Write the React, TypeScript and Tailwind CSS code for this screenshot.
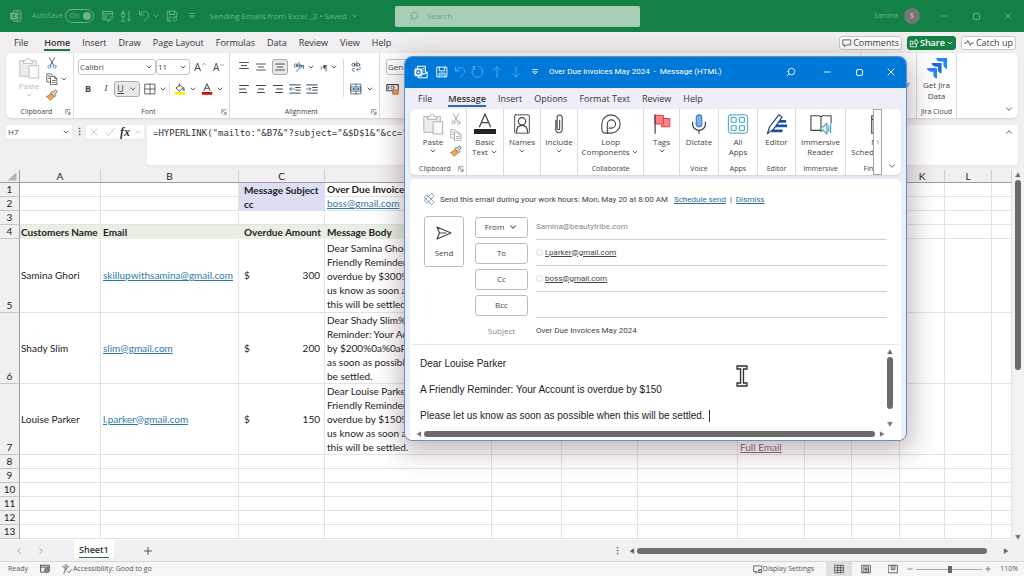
import type { ReactNode } from 'react'
import {
  AlignCenter, AlignLeft, AlignRight, ChevronDown, ChevronLeft, ChevronRight, ChevronUp,
  Mic, Minus, Plus, Search, X,
} from 'lucide-react'

const UI = 'font-["Open_Sans",sans-serif]'
const NARROW = 'font-["Roboto",sans-serif]'
const CELL = 'border-r border-b border-[#e3e3e3] overflow-hidden'

const columns = ['A', 'B', 'C', 'D', 'E', 'F', 'G', 'H', 'I', 'J', 'K', 'L', '']

const customers = [
  {
    row: 5,
    height: 'h-[74px]',
    name: 'Samina Ghori',
    email: 'skillupwithsamina@gmail.com',
    amount: 300,
    body: 'Dear Samina Ghori%0a%0aA\nFriendly Reminder: Your Account is\noverdue by $300%0a%0aPlease let\nus know as soon as possible when\nthis will be settled.',
  },
  {
    row: 6,
    height: 'h-[71px]',
    name: 'Shady Slim',
    email: 'slim@gmail.com',
    amount: 200,
    body: 'Dear Shady Slim%0a%0aA Friendly\nReminder: Your Account is overdue\nby $200%0a%0aPlease let us know\nas soon as possible when this will\nbe settled.',
  },
  {
    row: 7,
    height: 'h-[71px]',
    name: 'Louise Parker',
    email: 'l.parker@gmail.com',
    amount: 150,
    body: 'Dear Louise Parker%0a%0aA\nFriendly Reminder: Your Account is\noverdue by $150%0a%0aPlease let\nus know as soon as possible when\nthis will be settled.',
  },
]

/* ---------- icons ---------- */

function Svg({ box = 16, className = 'size-4', children }: { box?: number; className?: string; children: ReactNode }) {
  return (
    <svg
      viewBox={`0 0 ${box} ${box}`}
      className={`shrink-0 ${className}`}
      fill="none"
      stroke="currentColor"
      strokeWidth="1"
      strokeLinecap="round"
      strokeLinejoin="round"
      aria-hidden="true"
    >
      {children}
    </svg>
  )
}

const Caret = ({ className = '' }: { className?: string }) => (
  <ChevronDown className={`size-2 shrink-0 ${className}`} strokeWidth={2.5} aria-hidden="true" />
)

const ExcelLogo = () => (
  <Svg className="size-3">
    <path d="M5 1h9.500v14H5zM5 5.500h9.500M5 10.500h9.500M10 1v14" strokeWidth="1.200" />
    <path d="M1 4h7.500v8H1z" fill="currentColor" />
    <path d="m3 6 3.500 4M6.500 6 3 10" stroke="#138046" strokeWidth="1.400" />
  </Svg>
)

const OutlookLogo = () => (
  <Svg className="size-3.5">
    <path d="M4 4V1.500h9V8" strokeWidth="1.200" />
    <path d="M10 4h1.500M10 6.500h1.500" />
    <path d="M9 9l2.500 1.500L15 8v6.500H5V12" fill="#0078d7" strokeWidth="1.200" />
    <rect x="1" y="4.500" width="8" height="8" rx="1" fill="currentColor" />
    <circle cx="5" cy="8.500" r="2" stroke="#0078d4" strokeWidth="1.400" />
  </Svg>
)

const FormIcon = () => (
  <Svg className="size-3">
    <path d="M1 2h13v5M1 2v11h6M1 5h13M3 8h4M3 10.500h3" strokeWidth="1.300" />
    <path d="m8 15 1-3 4-4 2 2-4 4z" strokeWidth="1.200" />
  </Svg>
)

const SortIcon = () => (
  <Svg className="size-3">
    <path d="m1.500 7 2.500-6 2.500 6M2.500 5h3M2 9h4.500L2 15h4.500M12 1.500v13M9.500 12l2.500 2.500 2.500-2.500" strokeWidth="1.300" />
  </Svg>
)

const UndoIcon = () => (
  <Svg className="size-3">
    <path d="M2 1.500v5h5M2.500 6c2-4 7-5.500 10-2.500s1.500 6-1 8L8 15" strokeWidth="1.300" />
  </Svg>
)

const RedoIcon = () => (
  <Svg className="size-3.5">
    <path d="M4 2H1.500M4 2v3M4 2.500a6.300 6.300 0 1 0 5-.8" strokeWidth="1.100" />
  </Svg>
)

const SaveIcon = () => (
  <Svg className="size-3">
    <path d="M1.500 1.500h13v13h-13zM4.500 1.500v5h7V1.500M4 14.500V9.500h8v5M6 12h4" strokeWidth="1.200" />
  </Svg>
)

const SavePendingIcon = () => (
  <Svg className="size-3">
    <path d="M7 14.500H1.500v-13h11l2 2V7M4.500 1.500v4.500h7V1.500M4 14.500V9.500h3" strokeWidth="1.200" />
    <path d="M9 12a3 3 0 0 1 5-2M14 8v2h-2M15 12a3 3 0 0 1-5 2" strokeWidth="1.200" />
  </Svg>
)

const MoreIcon = () => (
  <Svg className="size-2">
    <path d="M3 3h10M4 8l4 4 4-4z" strokeWidth="1.600" />
  </Svg>
)

const ArrowIcon = ({ down = false }: { down?: boolean }) => (
  <Svg className="size-3.5">
    <path d={down ? 'M8 2v12M4 10l4 4 4-4' : 'M8 14V2M4 6l4-4 4 4'} />
  </Svg>
)

const PasteIcon = ({ className }: { className: string }) => (
  <Svg box={24} className={className}>
    <path d="M2.500 4.500h17V9H12v11.500H2.500z" fill="#ededed" stroke="none" />
    <path d="M7 4H2v17h10M17 4h3v5" />
    <path d="M6 6.500V4h2.500a2.500 2.500 0 0 1 5 0H16v2.500z" fill="#fff" />
    <path d="M12.500 9.500h10v13.500h-10z" fill="#fafafa" />
  </Svg>
)

const CutIcon = ({ accent = 'currentColor' }: { accent?: string }) => (
  <Svg className="size-3">
    <path d="M4.500 1 10 11M11.500 1 6 11" strokeWidth="1.100" />
    <circle cx="4.500" cy="12.800" r="2" stroke={accent} />
    <circle cx="11.500" cy="12.800" r="2" stroke={accent} />
  </Svg>
)

const CopyIcon = () => (
  <Svg className="size-3">
    <path d="M6 12H1V1h5l3 2M3 4h2M3 7h2" />
    <path d="M6.500 4.500h5l3 3v8h-8zM11.500 4.500v3h3M8.500 10h4M8.500 12.500h4" />
  </Svg>
)

const PainterIcon = () => (
  <Svg className="size-3">
    <path d="M1 10 7 6l4 4-5 5c-2-1-4-3-5-5z" fill="#e9a95c" stroke="#b5742d" />
    <path d="m6.500 5.500 5 5 1.500-1.500-1-2 3-3.500L13 1 9.500 4 8 3.500z" fill="#ddd" stroke="#555" />
  </Svg>
)

const LauncherIcon = () => (
  <Svg className="size-1.5">
    <path d="M2 12V2h11M6 6l7 7M13.500 8v6h-6" strokeWidth="1.800" stroke="#555" />
  </Svg>
)

const VAlign = ({ offset }: { offset: number }) => (
  <Svg className="size-3">
    <path d={`M2 ${2 + offset}h12M4.500 ${6 + offset}h7M2 ${10 + offset}h12`} strokeWidth="1.200" />
  </Svg>
)

const IndentIcon = ({ right = false }: { right?: boolean }) => (
  <Svg className="size-3">
    <path d="M1 2.500h14M9 6h6M9 9.500h6M1 13.500h14" strokeWidth="1.300" />
    <path d={right ? 'M1 8h5.500M4.500 6l2 2-2 2' : 'M6.500 8H1M3 6 1 8l2 2'} stroke="#2f7fb8" strokeWidth="1.300" />
  </Svg>
)

const BordersIcon = () => (
  <Svg className="size-3">
    <path d="M1.500 1.500h13v13h-13zM8 1.500v13M1.500 8h13" strokeWidth="1.100" />
  </Svg>
)

const FillIcon = () => (
  <Svg className="size-3">
    <path d="m3 6.500 5-4 4 4-4.500 4zM7 1v3" strokeWidth="1.200" />
    <path d="M13 6.500c1.500 2 1.500 3.500 0 3.500s-1.500-1.500 0-3.500z" fill="#2f7fb8" stroke="#2f7fb8" />
    <path d="M1 12h14v3.500H1z" fill="#ffee00" stroke="none" />
  </Svg>
)

const FontColorIcon = () => (
  <Svg className="size-3">
    <path d="m4 10 4-9 4 9M5.500 7h5" strokeWidth="1.300" />
    <path d="M1 12h14v3.500H1z" fill="#d40b0b" stroke="none" />
  </Svg>
)

const OrientationIcon = () => (
  <Svg className="size-3">
    <circle cx="3.500" cy="6" r="2" />
    <path d="M5.500 3.500v4.500M8 1.500v6.500" />
    <circle cx="9.800" cy="6.500" r="1.700" />
    <path d="m4 14 10-8M14 10V6h-4" stroke="#2f7fb8" strokeWidth="1.200" />
  </Svg>
)

const WrapIcon = () => (
  <Svg className="size-3">
    <circle cx="4.500" cy="5" r="2" />
    <path d="M6.500 3v4M9 1v6" />
    <circle cx="11" cy="5" r="2" />
    <path d="M6 10a2 2 0 1 0 0 3.500" />
    <path d="M13.500 8v3.500H9M11 9.500l-2 2 2 2" stroke="#2f7fb8" />
  </Svg>
)

const MergeIcon = () => (
  <Svg className="size-3">
    <path d="M1.500 5h13v6h-13z" fill="#bfe0f5" stroke="#2f7fb8" />
    <path d="M1.500 1.500h13v13h-13zM8 1.500v3.500M8 11v3.500M4 8h8M5.500 6.500 4 8l1.500 1.500M10.500 6.500 12 8l-1.500 1.500" />
  </Svg>
)

const MoneyIcon = () => (
  <Svg className="size-3.5">
    <path d="M1 3h13v7H1zM3 5.500v2" strokeWidth="1.300" />
    <circle cx="7.500" cy="6.500" r="1.800" />
    <path d="M8 9h6v5H8z" fill="#ee9c58" stroke="#c9712b" />
  </Svg>
)

const JiraLogo = () => (
  <Svg box={24} className="size-[22px]">
    <g stroke="none">
      <path d="M11 1h12v12a5 5 0 0 1-4-5V5h-3a5 5 0 0 1-5-4z" fill="#2684ff" />
      <path d="M6 6.500h11v11.500a5 5 0 0 1-4-5v-2.500h-2.500A5 5 0 0 1 6 6.500z" fill="#1d6ae0" />
      <path d="M1 12h11v11.500a5 5 0 0 1-4-5V16H5.500A5 5 0 0 1 1 12z" fill="#2684ff" />
    </g>
  </Svg>
)

const BasicTextIcon = () => (
  <Svg box={24} className="size-[22px]">
    <path d="m6 15 6-14 6 14M8 10.500h8" strokeWidth="1.400" />
    <path d="M0 17.500h24v5.500H0z" fill="#222" stroke="none" />
  </Svg>
)

const NamesIcon = () => (
  <Svg box={24} className="size-[22px]">
    <rect x="4" y="2" width="16" height="20" rx="1" />
    <circle cx="12" cy="9" r="4" strokeWidth="1.300" />
    <path d="M6 21c0-5 2.500-7.500 6-7.500s6 2.500 6 7.500" strokeWidth="1.300" />
  </Svg>
)

const ClipIcon = () => (
  <Svg box={24} className="size-[22px]">
    <path d="M8.500 8v10a3.500 3.500 0 0 0 7 0V5a2.500 2.500 0 0 0-5.500 0v12a1.300 1.300 0 0 0 2.700 0V8" strokeWidth="1.200" />
  </Svg>
)

const LoopIcon = () => (
  <Svg box={24} className="size-[22px]">
    <path d="M2 17.500V12a10 10 0 1 1 10 10H6.500c-2.500 0-4.500-1-4.500-4.500z" strokeWidth="1.200" />
    <path d="M8 22v-10a4.500 4.500 0 1 1 4.500 4.500H10" strokeWidth="1.200" />
  </Svg>
)

const FlagIcon = () => (
  <Svg box={24} className="size-[22px]">
    <path d="M4.500 2.500h9V6h7v9h-9v-3h-7z" fill="#ff8087" stroke="#d5343e" />
    <path d="M13.500 6v6.500" stroke="#d5343e" />
    <path d="M4.500 2v20" stroke="#444" strokeWidth="1.300" />
  </Svg>
)

const AppsIcon = () => (
  <Svg box={24} className="size-[22px]">
    <g stroke="#3f9fb0">
      <rect x="1.500" y="2" width="21" height="20" rx="2.500" fill="#edf8fa" />
      <rect x="5" y="5" width="5" height="5" fill="#fff" />
      <rect x="14" y="5" width="5" height="5" fill="#fff" />
      <rect x="5" y="14" width="5" height="5" fill="#fff" />
      <rect x="14" y="14" width="5" height="5" fill="#fff" />
    </g>
  </Svg>
)

const EditorIcon = () => (
  <Svg box={24} className="size-[22px]">
    <path d="M12 9h10M10 14h13M6 19.500h12" stroke="#1d4ea8" strokeWidth="3" strokeLinecap="butt" />
    <path d="M1.500 22.500 4 15 14 2l3.500 2.500L8 18z" fill="#fff" stroke="#1f3f7c" strokeWidth="1.300" />
  </Svg>
)

const ReaderIcon = () => (
  <Svg box={24} className="size-[22px]">
    <path d="M12 4v16l-1-1H1V3h9zM12 4l2-1h9v8M12 20l1-1" strokeWidth="1.200" />
    <path d="M12 15h2.500l4-4v12l-4-4H12zM20.500 14v6M22.500 12.500v9" stroke="#3f9fb0" fill="#e3f3f6" strokeWidth="1.200" />
  </Svg>
)

/* ---------- shared bits ---------- */

function WindowButtons() {
  return (
    <>
      <button aria-label="Minimize" className="flex size-8 items-center justify-center">
        <Minus className="size-2.5" strokeWidth={2} />
      </button>
      <button aria-label="Restore" className="flex size-8 items-center justify-center">
        <span className="size-[7px] rounded-[2px] border border-current" />
      </button>
      <button aria-label="Close" className="flex size-8 items-center justify-center">
        <X className="size-3" strokeWidth={2} />
      </button>
    </>
  )
}

function Tabs({ items, active, underline, className }: { items: string[]; active: string; underline: string; className: string }) {
  return (
    <nav className={`flex items-center gap-3 text-[9px] leading-3 text-[#333] ${className}`}>
      {items.map(item => (
        <button
          key={item}
          className={item === active ? `ml-1 border-b-2 pt-0.5 font-semibold ${underline}` : ''}
        >
          {item}
        </button>
      ))}
    </nav>
  )
}

function RibbonGroup({ label, width, launcher = false, children }: { label: string; width: string; launcher?: boolean; children: ReactNode }) {
  return (
    <section className={`flex shrink-0 flex-col overflow-hidden border-r border-[#dcdcdc] pt-1 ${width}`}>
      <div className="flex-1">{children}</div>
      <div className="flex h-3 items-center px-0.5 text-[7px] whitespace-nowrap">
        <span className="flex-1 text-center">{label}</span>
        {launcher && (
          <button aria-label={`${label} settings`}><LauncherIcon /></button>
        )}
      </div>
    </section>
  )
}

/* ---------- Excel ---------- */

function ExcelTitleBar() {
  return (
    <header className="flex h-8 shrink-0 items-center bg-[#138046] text-[7px] text-[#6db38a]">
      <div className="flex w-[395px] shrink-0 items-center pl-2.5">
        <ExcelLogo />
        <label htmlFor="autosave" className="ml-2.5">AutoSave</label>
        <button id="autosave" role="switch" aria-checked="true" className="ml-0.5 flex h-3.5 w-[29px] items-center justify-between rounded-full border border-current pr-0.5 pl-1">
          On <span className="size-2 rounded-full bg-current" />
        </button>
        <div className="ml-2 flex items-center gap-1.5">
          <button aria-label="Form"><FormIcon /></button>
          <button aria-label="Sort"><SortIcon /></button>
          <button aria-label="Undo" className="flex items-center gap-0.5"><UndoIcon /><Caret /></button>
          <button aria-label="Save"><SavePendingIcon /></button>
          <button aria-label="Customize" className="ml-1"><MoreIcon /></button>
        </div>
        <button className="ml-3.5 flex items-center gap-1 text-[8px] whitespace-nowrap">
          Sending Emails from Excel _2 • Saved <Caret />
        </button>
      </div>
      <label className="flex h-[21px] w-[245px] items-center gap-2 rounded-[2px] bg-[#a5ceb4] px-3.5 text-[8px] text-[#6aa984]">
        <Search className="size-2.5 -scale-x-100" />
        <input aria-label="Search" placeholder="Search" className="min-w-0 flex-1 bg-transparent placeholder:text-[#6aa984]" />
      </label>
      <div className="ml-auto flex items-center">
        <span>Samina</span>
        <span className="mr-2 ml-1.5 flex size-4 items-center justify-center rounded-full bg-[#7b756f] text-[#dcdcdc]">S</span>
        <WindowButtons />
      </div>
    </header>
  )
}

function ExcelMenu() {
  return (
    <div className="flex h-[21px] shrink-0 items-center justify-between pr-2 pl-3.5">
      <Tabs
        items={['File', 'Home', 'Insert', 'Draw', 'Page Layout', 'Formulas', 'Data', 'Review', 'View', 'Help']}
        active="Home"
        underline="border-[#217346]"
        className=""
      />
      <div className="flex gap-[5px] text-[9px] leading-3 whitespace-nowrap">
        <button className="flex items-center gap-px rounded-[3px] border border-[#c9c9c9] bg-white px-0.5">
          <Svg className="size-2.5"><path d="M2 3h12v8H7l-3 3v-3H2z" strokeWidth="1.300" /></Svg>
          Comments
        </button>
        <button className="flex items-center gap-px rounded-[3px] border border-[#138046] bg-[#138046] px-px font-semibold text-white">
          <Svg className="size-2.5"><path d="M6 5H2v9h10v-4M5 10c0-4 3-5 6-5V2l4 4.500-4 4V8c-3 0-5 0-6 2z" strokeWidth="1.300" /></Svg>
          Share <Caret />
        </button>
        <button className="flex items-center gap-0.5 rounded-[3px] border border-[#c9c9c9] bg-white px-0.5">
          <Svg className="size-2.5"><path d="M1 8h3l2-4 4 8 2-4h3" strokeWidth="1.400" /></Svg>
          Catch up
        </button>
      </div>
    </div>
  )
}

function ExcelRibbon() {
  return (
    <div className="mx-1.5 flex h-[65px] shrink-0 overflow-hidden rounded-[5px] bg-white text-[#444] shadow-sm">
      <RibbonGroup label="Clipboard" width="w-[68px]" launcher>
        <div className="flex gap-1.5 pl-3">
          <button className="flex flex-col items-center text-[8px] leading-[10px] text-[#bbb]">
            <PasteIcon className="mb-0.5 size-[22px]" />
            Paste
            <Caret />
          </button>
          <div className="flex flex-col gap-1">
            <button aria-label="Cut"><CutIcon accent="#2f7fb8" /></button>
            <button aria-label="Copy" className="flex items-center gap-0.5"><CopyIcon /><Caret /></button>
            <button aria-label="Format Painter"><PainterIcon /></button>
          </div>
        </div>
      </RibbonGroup>

      <RibbonGroup label="Font" width="w-[156px]" launcher>
        <div className="flex flex-col gap-1.5 pt-0.5 pl-1">
          <div className="flex h-4 items-center text-[8px]">
            <span className="flex h-4 w-[78px] items-center rounded-[3px] border border-[#c4c4c4] pr-0.5 pl-px">
              <select aria-label="Font" className="min-w-0 flex-1 appearance-none"><option>Calibri</option></select>
              <Caret />
            </span>
            <span className="flex h-4 w-[34px] items-center rounded-[3px] border border-[#c4c4c4] pr-0.5 pl-px">
              <select aria-label="Font size" className="min-w-0 flex-1 appearance-none"><option>11</option></select>
              <Caret />
            </span>
            <button aria-label="Increase font size" className="ml-1 flex text-[11px]">A<ChevronUp className="mt-0.5 size-1.5" /></button>
            <button aria-label="Decrease font size" className="ml-1.5 flex text-[10px]">A<ChevronDown className="mt-0.5 size-1.5" /></button>
          </div>
          <div className="flex h-4 items-center text-[9px]">
            <button className="w-5 font-bold">B</button>
            <button className="w-4 font-serif italic">I</button>
            <button className="flex h-4 w-[26px] items-center justify-around rounded-[3px] border border-[#aaa] bg-[#e8e8e8]">
              <u>U</u><Caret />
            </button>
            <button aria-label="Borders" className="ml-1 flex items-center gap-[3px]"><BordersIcon /><Caret /></button>
            <button aria-label="Fill color" className="ml-0.5 flex items-center gap-[3px] border-l border-[#dcdcdc] pl-1"><FillIcon /><Caret /></button>
            <button aria-label="Font color" className="ml-1 flex items-center gap-[3px]"><FontColorIcon /><Caret /></button>
          </div>
        </div>
      </RibbonGroup>

      <RibbonGroup label="Alignment" width="w-[150px]" launcher>
        <div className="flex pt-0.5 pl-2">
          <div className="flex min-w-0 flex-1 flex-col gap-1.5 border-r border-[#dcdcdc]">
            <div className="flex h-4 items-center gap-[5px]">
              <button aria-label="Top align"><VAlign offset={0} /></button>
              <button aria-label="Middle align"><VAlign offset={2} /></button>
              <button aria-label="Bottom align" className="flex size-4 shrink-0 items-center justify-center rounded-[3px] border border-[#aaa] bg-[#e8e8e8]"><VAlign offset={2} /></button>
              <button aria-label="Orientation" className="flex items-center gap-0.5"><OrientationIcon /><Caret /></button>
              <button aria-label="Text direction" className="flex items-center gap-0.5 text-[8px]">›¶<Caret /></button>
            </div>
            <div className="flex h-4 items-center gap-[5px]">
              <button aria-label="Align left"><AlignLeft className="size-3" /></button>
              <button aria-label="Center"><AlignCenter className="size-3" /></button>
              <button aria-label="Align right"><AlignRight className="size-3" /></button>
              <button aria-label="Decrease indent"><IndentIcon /></button>
              <button aria-label="Increase indent"><IndentIcon right /></button>
            </div>
          </div>
          <div className="flex w-[35px] shrink-0 flex-col gap-1.5 pl-1.5">
            <button aria-label="Wrap text" className="flex h-4 items-center"><WrapIcon /></button>
            <button aria-label="Merge cells" className="flex h-4 items-center gap-1"><MergeIcon /><Caret /></button>
          </div>
        </div>
      </RibbonGroup>

      <RibbonGroup label="Number" width="min-w-0 flex-1">
        <div className="flex flex-col gap-1.5 pt-0.5 pl-1.5">
          <span className="flex h-4 w-20 items-center rounded-[3px] border border-[#c4c4c4] pl-px text-[8px]">
            <select aria-label="Number format" className="min-w-0 flex-1 appearance-none"><option>General</option></select>
            <Caret />
          </span>
          <button aria-label="Accounting format" className="flex h-4 items-center"><MoneyIcon /></button>
        </div>
      </RibbonGroup>

      <RibbonGroup label="Modeling" width="w-14">
        <div className="pt-[21px] pr-1.5 text-right text-[8px]">Solver</div>
      </RibbonGroup>

      <RibbonGroup label="Jira Cloud" width="w-10">
        <button className="flex w-full flex-col items-center text-[8px] leading-[11px]">
          <JiraLogo />
          Get Jira<br />Data
        </button>
      </RibbonGroup>

      <button aria-label="Collapse ribbon" className="flex w-[61px] shrink-0 items-end justify-end pr-1 pb-1">
        <ChevronDown className="size-2.5" />
      </button>
    </div>
  )
}

function FormulaBar() {
  return (
    <div className="mt-[7px] mb-[5px] flex h-10 shrink-0 items-start gap-[3px] px-1.5">
      <label className="flex h-3.5 w-[66px] shrink-0 items-center rounded-[3px] bg-white px-0.5 text-[8px] shadow-xs">
        <input aria-label="Name box" defaultValue="H7" className="min-w-0 flex-1" />
        <Caret />
      </label>
      <span className="flex h-3.5 w-2 items-center justify-center text-[9px] font-bold text-[#555]">⋮</span>
      <div className="flex h-3.5 w-[58px] shrink-0 items-center justify-between rounded-[3px] bg-white px-0.5 text-[#bbb] shadow-xs">
        <button aria-label="Cancel"><X className="size-3" strokeWidth={1.5} /></button>
        <button aria-label="Enter">
          <Svg className="size-3"><path d="m2 9 4 4 8-10" /></Svg>
        </button>
        <button className='font-["Liberation_Serif",serif] text-[12px] leading-3 font-bold text-[#333] italic'>fx</button>
        <Caret />
      </div>
      <div className="flex h-10 flex-1 items-start rounded-[3px] bg-white pt-0.5 pr-1 pl-1.5 shadow-xs">
        <input
          aria-label="Formula"
          className='min-w-0 flex-1 font-["DejaVu_Sans_Mono",monospace] text-[9px] leading-3 text-[#333]'
          defaultValue={'=HYPERLINK("mailto:"&B7&"?subject="&$D$1&"&cc="&$D$2&"&body="&D7,"Full Email")'}
        />
        <ChevronUp className="size-2.5" />
      </div>
    </div>
  )
}

function RowHead({ n }: { n: number }) {
  return (
    <th className="border-r border-b border-[#c6c6c6] border-r-[#9d9d9d] bg-[#f1eff1] text-center align-bottom text-[10px] font-normal">{n}</th>
  )
}

function Blanks({ count }: { count: number }) {
  return <>{Array.from({ length: count }, (_, i) => <td key={i} className={CELL} />)}</>
}

function Sheet() {
  return (
    <div className="flex min-h-0 flex-1">
      <div className="min-w-0 flex-1 overflow-hidden bg-white">
        <table className='w-full table-fixed border-separate border-spacing-0 font-["Lato",sans-serif] text-[10px] leading-[13px] text-[#222]'>
          <colgroup>
            <col className="w-5" />
            <col className="w-[81px]" />
            <col className="w-[138px]" />
            <col className="w-[86px]" />
            <col className="w-[167px]" />
            <col className="w-[70px]" />
            <col className="w-[76px]" />
            <col className="w-[100px]" />
            <col className="w-[67px]" />
            <col className="w-[47px]" />
            <col className="w-[48px]" />
            <col className="w-[45px]" />
            <col className="w-[47px]" />
            <col />
          </colgroup>
          <thead>
            <tr className="h-[13px] bg-[#f1eff1] leading-3">
              <th className="border-r border-b border-[#9d9d9d]">
                <Svg className="mr-0.5 ml-auto size-2.5"><path d="M15 2v13H1z" fill="#b5b5b5" stroke="none" /></Svg>
              </th>
              {columns.map((c, i) => (
                <th key={i} className="border-r border-b border-[#d0d0d0] border-b-[#9d9d9d] font-normal">{c}</th>
              ))}
            </tr>
          </thead>
          <tbody>
            <tr className="h-3.5">
              <RowHead n={1} />
              <Blanks count={2} />
              <td className="bg-[#dcdff4] pl-[5px] font-bold whitespace-nowrap">Message Subject</td>
              <td className={`pl-0.5 font-bold whitespace-nowrap ${CELL}`}>Over Due Invoices May 2024</td>
              <Blanks count={9} />
            </tr>
            <tr className="h-3.5">
              <RowHead n={2} />
              <Blanks count={2} />
              <td className="bg-[#dcdff4] pl-[5px] font-bold">cc</td>
              <td className={`pl-0.5 ${CELL}`}>
                <a href="mailto:boss@gmail.com" className="text-[#2d7ba8] underline">boss@gmail.com</a>
              </td>
              <Blanks count={9} />
            </tr>
            <tr className="h-3.5">
              <RowHead n={3} />
              <Blanks count={13} />
            </tr>
            <tr className="h-3.5 text-left">
              <RowHead n={4} />
              <th className="bg-[#e9efe2] pl-px whitespace-nowrap">Customers Name</th>
              <th className="bg-[#e9efe2] pl-0.5">Email</th>
              <th className="bg-[#e9efe2] pl-[5px] whitespace-nowrap">Overdue Amount</th>
              <th className="bg-[#e9efe2] pl-0.5">Message Body</th>
              <Blanks count={9} />
            </tr>
            {customers.map(c => (
              <tr key={c.row} className={c.height}>
                <RowHead n={c.row} />
                <td className={`pl-px ${CELL}`}>{c.name}</td>
                <td className={`pl-0.5 ${CELL}`}>
                  <a href={`mailto:${c.email}`} className="text-[#2d7ba8] underline">{c.email}</a>
                </td>
                <td className={`pr-1 pl-[5px] ${CELL}`}>
                  <div className="flex justify-between"><span>$</span><span>{c.amount}</span></div>
                </td>
                <td className={`pl-0.5 leading-[14px] whitespace-pre ${CELL}`}>{c.body}</td>
                <Blanks count={3} />
                <td className={`pl-0.5 align-bottom ${CELL}`}>
                  <a href={`mailto:${c.email}`} className="text-[#96607c] underline">Full Email</a>
                </td>
                <Blanks count={5} />
              </tr>
            ))}
            {[8, 9, 10, 11, 12, 13].map(n => (
              <tr key={n} className="h-3.5">
                <RowHead n={n} />
                <Blanks count={13} />
              </tr>
            ))}
          </tbody>
        </table>
      </div>
      <div className="flex w-3 flex-col items-center gap-0.5 bg-[#f3f1f3] pt-0.5 text-[#6b6b6b]">
        <Svg className="size-1.5"><path d="M8 2l6 11H2z" fill="currentColor" /></Svg>
        <span className="h-[190px] w-1.5 rounded-full bg-[#6b6b6b]" />
        <Svg className="mt-auto size-1.5"><path d="M8 14l6-11H2z" fill="currentColor" /></Svg>
      </div>
    </div>
  )
}

function SheetTabs() {
  return (
    <div className="flex h-[21px] shrink-0 items-center bg-[#f2f0f2] pr-[15px] pl-3.5 text-[#555]">
      <button aria-label="Previous sheet" className="text-[#999]"><ChevronLeft className="size-2.5" /></button>
      <button aria-label="Next sheet" className="ml-3 text-[#999]"><ChevronRight className="size-2.5" /></button>
      <button className="ml-7 h-[19px] self-start rounded-b-[3px] bg-white px-[5px] text-[9px] leading-3 font-semibold text-[#333]">
        <span className="block border-b border-[#217346] pt-0.5 pb-px">Sheet1</span>
      </button>
      <button aria-label="New sheet" className="ml-7"><Plus className="size-3" /></button>
      <span className="ml-auto w-4 text-[9px] font-bold">⋮</span>
      <div className="flex w-[380px] items-center gap-0.5">
        <Svg className="size-1.5"><path d="M3 8l10-6v12z" fill="currentColor" /></Svg>
        <span className="h-1.5 w-[350px] rounded-full bg-[#6f6f6f]" />
        <Svg className="ml-auto size-1.5"><path d="M13 8 3 2v12z" fill="currentColor" /></Svg>
      </div>
    </div>
  )
}

function StatusBar() {
  return (
    <footer className="flex h-[15px] shrink-0 items-center border-t border-[#d6d6d6] bg-[#f7f5f7] pr-1.5 pl-2 text-[7px] whitespace-nowrap text-[#555]">
      <span>Ready</span>
      <Svg className="ml-3 size-2.5"><path d="M1 2h14v5M1 2v11h6M1 5h14" strokeWidth="1.600" /><circle cx="11" cy="10" r="4" fill="#888" /></Svg>
      <button className="ml-3 flex items-center gap-px">
        <Svg className="size-2.5"><circle cx="6" cy="2.500" r="1.500" /><path d="M1 4l4 2v4l-2 5M11 4 7 6v3M9 12l2 2 4-5" strokeWidth="1.400" /></Svg>
        Accessibility: Good to go
      </button>
      <button className="ml-auto flex items-center">
        <Svg className="size-2.5"><path d="M6 12H1V3h13v4M4 14h3" strokeWidth="1.300" /><circle cx="11.500" cy="11.500" r="2.500" strokeWidth="1.800" /></Svg>
        Display Settings
      </button>
      <button aria-label="Normal view" className="ml-3 flex h-3.5 w-[26px] items-center justify-center bg-[#e1e0e1]">
        <Svg className="size-2.5"><path d="M1 2h14v12H1zM1 6h14M1 10h14M6 2v12M10.500 2v12" strokeWidth="1.400" /></Svg>
      </button>
      <button aria-label="Page layout view" className="flex w-[27px] justify-center">
        <Svg className="size-2.5"><path d="M1 2h14v12H1zM4 4.500h8v9H4zM6 7h4M6 9h4M6 11h4" strokeWidth="1.400" /></Svg>
      </button>
      <button aria-label="Page break view" className="flex w-[27px] justify-center">
        <Svg className="size-2.5"><path d="M1 2h14v12H1zM5 2v7h6V2M8 2v7" strokeWidth="1.400" /></Svg>
      </button>
      <button aria-label="Zoom out"><Minus className="size-2" /></button>
      <input
        type="range"
        aria-label="Zoom"
        defaultValue={52}
        className="mx-0.5 h-2 w-[66px] appearance-none bg-transparent [&::-webkit-slider-runnable-track]:h-px [&::-webkit-slider-runnable-track]:bg-[#a5a5a5] [&::-webkit-slider-thumb]:-mt-[3px] [&::-webkit-slider-thumb]:h-[7px] [&::-webkit-slider-thumb]:w-1 [&::-webkit-slider-thumb]:appearance-none [&::-webkit-slider-thumb]:bg-[#666]"
      />
      <button aria-label="Zoom in"><Plus className="size-2" /></button>
      <span className="ml-2">110%</span>
    </footer>
  )
}

/* ---------- Outlook message window ---------- */

function BigButton({ icon, lines, caret = false, inlineCaret = false }: { icon: ReactNode; lines: string[]; caret?: boolean; inlineCaret?: boolean }) {
  return (
    <button className="flex w-full flex-col items-center text-[8px] leading-[10px] whitespace-nowrap">
      <span className="mb-0.5">{icon}</span>
      {lines.map((line, i) => (
        <span key={line} className="flex items-center gap-0.5">
          {line}
          {inlineCaret && i === lines.length - 1 && <Caret />}
        </span>
      ))}
      {caret && <Caret />}
    </button>
  )
}

function MessageRibbon() {
  return (
    <div className="mx-[5px] flex h-[66px] overflow-hidden rounded-[5px] bg-white text-[#444] shadow-sm">
      <RibbonGroup label="Clipboard" width="w-[57px]" launcher>
        <div className="flex gap-1.5 pl-3">
          <button className="flex flex-col items-center text-[8px] leading-[10px]">
            <PasteIcon className="mb-0.5 size-[22px] text-[#aaa]" />
            Paste
            <Caret />
          </button>
          <div className="flex flex-col gap-1">
            <button aria-label="Cut" className="text-[#999]"><CutIcon /></button>
            <button aria-label="Copy" className="text-[#999]"><CopyIcon /></button>
            <button aria-label="Format Painter"><PainterIcon /></button>
          </div>
        </div>
      </RibbonGroup>
      <RibbonGroup label="" width="w-[37px]"><BigButton icon={<BasicTextIcon />} lines={['Basic', 'Text']} inlineCaret /></RibbonGroup>
      <RibbonGroup label="" width="w-[37px]"><BigButton icon={<NamesIcon />} lines={['Names']} caret /></RibbonGroup>
      <RibbonGroup label="" width="w-[37px]"><BigButton icon={<ClipIcon />} lines={['Include']} caret /></RibbonGroup>
      <RibbonGroup label="Collaborate" width="w-[66px]"><BigButton icon={<LoopIcon />} lines={['Loop', 'Components']} inlineCaret /></RibbonGroup>
      <RibbonGroup label="" width="w-9"><BigButton icon={<FlagIcon />} lines={['Tags']} caret /></RibbonGroup>
      <RibbonGroup label="Voice" width="w-[39px]">
        <BigButton icon={<Mic className="size-[22px] [&>rect]:fill-[#7fb5ea] [&>rect]:stroke-[#3d7fc4]" strokeWidth={1.3} />} lines={['Dictate']} />
      </RibbonGroup>
      <RibbonGroup label="Apps" width="w-[39px]"><BigButton icon={<AppsIcon />} lines={['All', 'Apps']} /></RibbonGroup>
      <RibbonGroup label="Editor" width="w-[38px]"><BigButton icon={<EditorIcon />} lines={['Editor']} /></RibbonGroup>
      <RibbonGroup label="Immersive" width="w-[50px]"><BigButton icon={<ReaderIcon />} lines={['Immersive', 'Reader']} /></RibbonGroup>
      <div className="flex w-[27px] shrink-0 overflow-hidden">
        <RibbonGroup label="Find Time" width="w-[68px]">
          <BigButton
            icon={<Svg box={24} className="size-[22px]"><path d="M3 3h18v19H3zM3 7h18" strokeWidth="1.300" /></Svg>}
            lines={['New', 'Scheduling Poll']}
          />
        </RibbonGroup>
      </div>
      <button aria-label="Scroll right" className="flex w-[9px] shrink-0 items-center justify-center border border-[#a5a5a5] bg-white">
        <ChevronRight className="size-1.5 shrink-0" />
      </button>
      <button aria-label="Collapse ribbon" className="flex flex-1 items-end justify-center pb-1">
        <ChevronDown className="size-2.5" />
      </button>
    </div>
  )
}

function AddressRow({ label, children, caret = false }: { label: string; children?: ReactNode; caret?: boolean }) {
  return (
    <div className="flex h-[26px] items-center gap-2">
      <button className={`flex h-[21px] w-[53px] items-center justify-center gap-1 rounded-[3px] border border-[#bcbcbc] text-[8px] ${UI}`}>
        {label}
        {caret && <ChevronDown className="size-2.5" strokeWidth={2.5} />}
      </button>
      <div className="flex h-full flex-1 items-center gap-0.5 border-b border-[#d0d0d0]">{children}</div>
    </div>
  )
}

function Recipient({ address }: { address: string }) {
  return (
    <>
      <span className="size-[7px] rounded-full border border-[#d8d8d8]" />
      <a href={`mailto:${address}`} className="underline">{address}</a>
    </>
  )
}

function MessageWindow() {
  return (
    <div className="absolute top-14 left-[404px] w-[503px] overflow-hidden rounded-lg border border-[#5b93cd] bg-[#eeeef8] text-[#444] shadow-[0_6px_26px_4px_rgba(60,30,50,0.32)]">
      <header className="-mx-px -mt-px flex h-8 items-center bg-[#0078d7] pl-2.5 text-[8px] text-white">
        <OutlookLogo />
        <button aria-label="Save" className="ml-2"><SaveIcon /></button>
        <div className="ml-1.5 flex gap-[5px] text-[#5fadeb]">
          <button aria-label="Undo"><UndoIcon /></button>
          <button aria-label="Redo"><RedoIcon /></button>
          <button aria-label="Previous item"><ArrowIcon /></button>
          <button aria-label="Next item"><ArrowIcon down /></button>
        </div>
        <button aria-label="Customize" className="ml-2"><MoreIcon /></button>
        <h1 className={`ml-2.5 whitespace-nowrap ${NARROW}`}>Over Due Invoices May 2024&nbsp; -&nbsp; Message (HTML)</h1>
        <button aria-label="Search" className="mr-[15px] ml-auto"><Search className="size-2.5 -scale-x-100" /></button>
        <WindowButtons />
      </header>
      <Tabs
        items={['File', 'Message', 'Insert', 'Options', 'Format Text', 'Review', 'Help']}
        active="Message"
        underline="border-[#2b6cb0]"
        className="h-[21px] px-[13px]"
      />
      <MessageRibbon />

      <div className={`mx-[5px] mt-1 rounded-t-[5px] bg-white text-[8px] ${NARROW}`}>
        <div className="flex items-center gap-1 px-3.5 pt-3.5 pb-[9px] leading-[11px] whitespace-nowrap">
          <Svg className="size-3 text-[#5f86b5]">
            <rect x="4" y="1" width="5" height="14" rx="1" transform="rotate(45 8 8)" />
            <rect x="1" y="7" width="14" height="5" rx="1" transform="rotate(45 8 8)" />
          </Svg>
          <span>Send this email during your work hours: Mon, May 20 at 8:00 AM</span>
          <a href="#schedule" className="ml-0.5 text-[#2b6f94] underline">Schedule send</a>
          <span>|</span>
          <a href="#dismiss" className="text-[#2b6f94] underline">Dismiss</a>
        </div>
        <div className="flex gap-[11px] px-3.5">
          <button className={`mt-0.5 flex h-[51px] w-10 flex-col items-center justify-center gap-1.5 rounded-[3px] border border-[#bcbcbc] ${UI}`}>
            <Svg className="size-4"><path d="M1 2l14 6-14 6 2.500-6zM3.500 8H10" strokeWidth="1.200" /></Svg>
            Send
          </button>
          <div className="flex-1">
            <AddressRow label="From" caret><span className="text-[#888]">Samina@beautytribe.com</span></AddressRow>
            <AddressRow label="To"><Recipient address="l.parker@gmail.com" /></AddressRow>
            <AddressRow label="Cc"><Recipient address="boss@gmail.com" /></AddressRow>
            <AddressRow label="Bcc" />
            <div className="flex h-[26px] items-center gap-2">
              <label htmlFor="subject" className={`w-[53px] text-center text-[#888] ${UI}`}>Subject</label>
              <input id="subject" defaultValue="Over Due Invoices May 2024" className="min-w-0 flex-1" />
            </div>
          </div>
        </div>
        <div className="mx-0.5 flex border-t border-[#e6e6e6]">
          <div
            role="textbox"
            aria-label="Message body"
            className='flex flex-1 flex-col gap-3 pt-3 pb-1 pl-2 font-["Liberation_Sans",sans-serif] text-[10px] leading-[14px] text-[#222]'
          >
            <p>Dear Louise Parker</p>
            <p>A Friendly Reminder: Your Account is overdue by $150</p>
            <p className="flex items-center gap-1">
              Please let us know as soon as possible when this will be settled.
              <span className="h-3 w-px bg-[#333]" />
            </p>
          </div>
          <div className="flex w-[18px] flex-col items-center gap-0.5 pt-1 text-[#6b6b6b]">
            <Svg className="size-1.5"><path d="M8 2l6 11H2z" fill="currentColor" /></Svg>
            <span className="h-[52px] w-1.5 rounded-full bg-[#6b6b6b]" />
            <Svg className="mt-auto size-1.5"><path d="M8 14l6-11H2z" fill="currentColor" /></Svg>
          </div>
        </div>
        <div className="flex h-[13px] items-center gap-0.5 pr-4 pl-1.5 text-[#6b6b6b]">
          <Svg className="size-1.5"><path d="M3 8l10-6v12z" fill="currentColor" /></Svg>
          <span className="h-1.5 flex-1 rounded-full bg-[#6b6b6b]" />
          <Svg className="ml-0.5 size-1.5"><path d="M13 8 3 2v12z" fill="currentColor" /></Svg>
        </div>
      </div>
    </div>
  )
}

export default function App() {
  return (
    <main className={`relative flex h-screen flex-col overflow-hidden bg-[#f1eff1] text-[#444] ${UI}`}>
      <ExcelTitleBar />
      <ExcelMenu />
      <ExcelRibbon />
      <FormulaBar />
      <Sheet />
      <SheetTabs />
      <StatusBar />
      <MessageWindow />
      {/* text cursor */}
      <svg viewBox="0 0 12 22" className="absolute top-[365px] left-[736px] h-[22px] w-3" aria-hidden="true">
        <path d="M1 1h10v3H7.500v14H11v3H1v-3h3.500V4H1z" fill="#eee" stroke="#333" strokeWidth="1.300" />
      </svg>
    </main>
  )
}
